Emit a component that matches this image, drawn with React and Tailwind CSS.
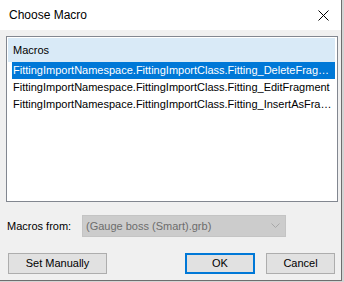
export default function App() {
    const macros = [
        "FittingImportNamespace.FittingImportClass.Fitting_DeleteFrag…",
        "FittingImportNamespace.FittingImportClass.Fitting_EditFragment",
        "FittingImportNamespace.FittingImportClass.Fitting_InsertAsFra…",
    ];

    return (
        <div className="w-[344px] h-[282px] bg-[#d4d4d4] overflow-hidden" style={{ fontFamily: '"Liberation Sans", Arial, sans-serif' }}>
            <div className="w-[342px] h-[281px] bg-[#f0f0f0] border-r border-b border-[#6e6e6e] flex flex-col text-[11px] text-black">
                {/* title bar */}
                <div className="h-[30px] bg-white flex items-center justify-between pl-[9px] pr-[8px] shrink-0">
                    <span className="text-[12px]">Choose Macro</span>
                    <svg width="11" height="11" viewBox="0 0 11 11" className="mr-[4px]">
                        <path d="M0.5 0.5 L10.5 10.5 M10.5 0.5 L0.5 10.5" stroke="#000" strokeWidth="1" />
                    </svg>
                </div>

                {/* list box */}
                <div className="mt-[6px] ml-[6px] w-[332px] h-[166px] border border-[#828790] bg-white p-[1px] pr-[2px]">
                    <div className="h-[24px] bg-[#d9eaf7] flex items-center pl-[5px]">Macros</div>
                    <div className="pl-[4px]">
                        {macros.map((m, i) => (
                            <div
                                key={i}
                                className={
                                    "h-[17px] flex items-center pl-[1px] whitespace-nowrap overflow-hidden " +
                                    (i === 0 ? "bg-[#0078d7] text-white" : "")
                                }
                            >
                                {m}
                            </div>
                        ))}
                    </div>
                </div>

                {/* macros from */}
                <div className="flex items-center mt-[13px] pl-[7px]">
                    <span className="w-[75px]">Macros from:</span>
                    <div className="w-[204px] h-[22px] bg-[#cccccc] border border-[#c4c4c4] flex items-center justify-between pl-[3px] pr-[5px] text-[#6d6d6d]">
                        <span>(Gauge boss (Smart).grb)</span>
                        <svg width="9" height="6" viewBox="0 0 9 6">
                            <path d="M0.5 0.5 L4.5 4.5 L8.5 0.5" fill="none" stroke="#a8a8a8" strokeWidth="1" />
                        </svg>
                    </div>
                </div>

                {/* buttons */}
                <div className="flex items-center mt-[16px] pl-[8px]">
                    <button className="w-[99px] h-[21px] bg-[#e1e1e1] border border-[#adadad] flex items-center justify-center">
                        Set Manually
                    </button>
                    <button className="ml-[78px] w-[70px] h-[21px] bg-[#e1e1e1] border-2 border-[#0078d7] flex items-center justify-center">
                        OK
                    </button>
                    <button className="ml-[11px] w-[69px] h-[21px] bg-[#e1e1e1] border border-[#adadad] flex items-center justify-center">
                        Cancel
                    </button>
                </div>
            </div>
        </div>
    );
}
